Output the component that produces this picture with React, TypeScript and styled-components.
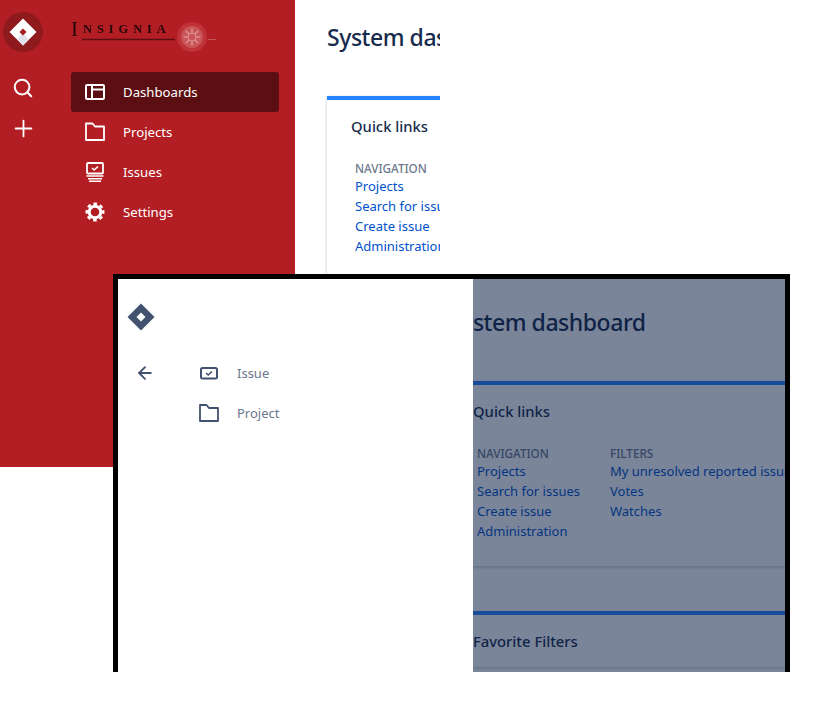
import styled, { createGlobalStyle } from "styled-components";
import { LuSearch, LuPlus, LuArrowLeft } from "react-icons/lu";

const GlobalStyle = createGlobalStyle`
    html, body {
        margin: 0;
        padding: 0;
        background: #fff;
    }
    body {
        font-family: "Noto Sans", "Open Sans", sans-serif;
    }
`;

const Page = styled.div`
    position: relative;
    width: 820px;
    height: 727px;
    overflow: hidden;
    background: #fff;
`;

const Backdrop = styled.div`
    display: flex;
    align-items: flex-start;
`;

const Sidebar = styled.aside`
    display: flex;
    width: 295px;
    height: 467px;
    background: #b31e25;
    color: #fff;
`;

const GlobalRail = styled.div`
    width: 46px;
    display: flex;
    flex-direction: column;
    align-items: center;
    padding-top: 12px;
    box-sizing: border-box;
`;

const RailButton = styled.span`
    display: flex;
    align-items: center;
    justify-content: center;
    height: 40px;
    font-size: 22px;
`;

const RailLogo = styled.svg`
    width: 40px;
    height: 40px;
    margin-bottom: 16px;
`;

const NavColumn = styled.div`
    margin-left: 25px;
    width: 208px;
`;

const Brand = styled.svg`
    display: block;
    width: 150px;
    height: 72px;
    filter: blur(0.4px);
`;

const NavItem = styled.a<{ $active?: boolean }>`
    display: flex;
    align-items: center;
    height: 40px;
    padding-left: 14px;
    gap: 18px;
    border-radius: 3px;
    font-size: 13.2px;
    color: #fff;
    background: ${(p) => (p.$active ? "#5c0f12" : "transparent")};
`;

const NavIcon = styled.svg`
    width: 20px;
    height: 20px;
    flex: none;
`;

const MainClip = styled.main`
    width: 113px;
    height: 467px;
    overflow: hidden;
    padding-left: 32px;
`;

const Content = styled.div<{ $top: number }>`
    width: 400px;
    padding-top: ${(p) => p.$top}px;
    color: #172b4d;
`;

const Title = styled.h1`
    margin: 0 0 41px;
    height: 36px;
    font-size: 23px;
    letter-spacing: -0.45px;
    line-height: 36px;
    font-weight: 500;
    white-space: nowrap;
`;

const Card = styled.section<{ $height: number }>`
    height: ${(p) => p.$height}px;
    box-sizing: border-box;
    border-top: 4px solid #2684ff;
    box-shadow: 0 1px 3px rgba(9, 30, 66, 0.25);
    margin-bottom: 45px;
    padding: 0 24px;
`;

const CardTitle = styled.h2`
    margin: 0;
    padding-top: 15px;
    font-size: 14.8px;
    line-height: 22px;
    font-weight: 500;
`;

const LinkColumns = styled.div`
    display: flex;
    margin-top: 24px;
    padding-left: 4px;
`;

const LinkColumn = styled.div<{ $width: number }>`
    width: ${(p) => p.$width}px;
    flex: none;
`;

const ColumnHead = styled.div`
    font-size: 11.7px;
    line-height: 15px;
    font-weight: 500;
    color: #6b778c;
`;

const QuickLink = styled.a`
    display: block;
    font-size: 13px;
    line-height: 20px;
    color: #0052cc;
    white-space: nowrap;
`;

const Overlay = styled.div`
    position: absolute;
    left: 113px;
    top: 274px;
    width: 677px;
    height: 398px;
    box-sizing: border-box;
    display: flex;
    border: 5px solid #000;
    border-bottom: none;
`;

const Drawer = styled.div`
    width: 355px;
    flex: none;
    background: #fff;
    color: #42526e;
`;

const DrawerLogo = styled.svg`
    display: block;
    width: 28px;
    height: 28px;
    margin: 24px 0 0 9px;
`;

const DrawerBody = styled.div`
    display: flex;
    margin-top: 22px;
`;

const BackButton = styled.span`
    display: flex;
    align-items: center;
    justify-content: center;
    width: 54px;
    height: 40px;
    font-size: 20px;
`;

const DrawerList = styled.div`
    margin-left: 26px;
`;

const DrawerItem = styled.a`
    display: flex;
    align-items: center;
    gap: 17px;
    height: 40px;
    font-size: 13px;
    color: #6b778c;
`;

const DrawerIcon = styled.svg`
    width: 22px;
    height: 22px;
    flex: none;
`;

const Blanket = styled.div`
    position: relative;
    flex: 1;
    overflow: hidden;

    &::after {
        content: "";
        position: absolute;
        inset: 0;
        background: rgba(9, 30, 66, 0.54);
    }
`;

const BlanketInner = styled.div`
    margin-left: -24px;
`;

function Dashboard({ top }: { top: number }) {
    return (
        <Content $top={top}>
            <Title>System dashboard</Title>
            <Card $height={185}>
                <CardTitle>Quick links</CardTitle>
                <LinkColumns>
                    <LinkColumn $width={133}>
                        <ColumnHead>NAVIGATION</ColumnHead>
                        <QuickLink>Projects</QuickLink>
                        <QuickLink>Search for issues</QuickLink>
                        <QuickLink>Create issue</QuickLink>
                        <QuickLink>Administration</QuickLink>
                    </LinkColumn>
                    <LinkColumn $width={220}>
                        <ColumnHead>FILTERS</ColumnHead>
                        <QuickLink>My unresolved reported issues</QuickLink>
                        <QuickLink>Votes</QuickLink>
                        <QuickLink>Watches</QuickLink>
                    </LinkColumn>
                </LinkColumns>
            </Card>
            <Card $height={56}>
                <CardTitle>Favorite Filters</CardTitle>
            </Card>
        </Content>
    );
}

export default function App() {
    return (
        <Page>
            <GlobalStyle />
            <Backdrop>
                <Sidebar>
                    <GlobalRail>
                        <RailLogo viewBox="0 0 40 40">
                            <circle cx="20" cy="20" r="20" fill="#8f1a1e" />
                            <path d="M20 6.500 33.500 20 20 33.500 6.500 20Z" fill="#fff" />
                            <path d="M20 33.500 26 27.500 20 21 14 27Z" fill="#dfe2ea" />
                            <path d="M20 16.500 23.500 20 20 23.500 16.500 20Z" fill="#a51b22" />
                        </RailLogo>
                        <RailButton><LuSearch strokeWidth={2.2} /></RailButton>
                        <RailButton><LuPlus strokeWidth={1.6} style={{ fontSize: 27 }} /></RailButton>
                    </GlobalRail>
                    <NavColumn>
                        <Brand viewBox="0 0 150 72">
                            <text x="0" y="36" fontFamily="Liberation Serif" fontSize="21" fill="#240709">I</text>
                            <text x="12" y="33" fontFamily="Liberation Serif" fontWeight="700" fontSize="12.5" letterSpacing="4.9" fill="#240709">NSIGNIA</text>
                            <path d="M11 39.500H104" stroke="#5e0d11" strokeWidth="1.300" />
                            <circle cx="121" cy="37" r="15" fill="#bf3237" />
                            <circle cx="121" cy="37" r="11" fill="#c95558" />
                            <path d="M115 31l12 12M127 31l-12 12M121 28.500v17M112.500 37h17" stroke="#dc8f90" strokeWidth="1.600" />
                            <circle cx="121" cy="37" r="4" fill="#c95558" stroke="#dc8f90" />
                            <path d="M137 39.500h8" stroke="#c9575a" />
                        </Brand>
                        <NavItem $active>
                            <NavIcon viewBox="0 0 20 20" fill="none" stroke="#fff" strokeWidth="2">
                                <rect x="1" y="3" width="18" height="14" rx="1" />
                                <path d="M7 3v14M7 7.500h12" />
                            </NavIcon>
                            Dashboards
                        </NavItem>
                        <NavItem>
                            <NavIcon viewBox="0 0 20 20" fill="none" stroke="#fff" strokeWidth="1.800" strokeLinejoin="round">
                                <path d="M1 1.500h6.500l2.500 3h9v13.500H1Z" />
                            </NavIcon>
                            Projects
                        </NavItem>
                        <NavItem>
                            <NavIcon viewBox="0 0 20 20" fill="none" stroke="#fff" strokeWidth="1.800">
                                <rect x="2" y="1" width="16" height="10.500" rx="1" />
                                <path d="M7 6l2.200 2L13 4.500" strokeWidth="1.600" />
                                <path d="M1.500 14h17M3 16.800h14M4 19.200h12" strokeWidth="1.400" />
                            </NavIcon>
                            Issues
                        </NavItem>
                        <NavItem>
                            <NavIcon viewBox="0 0 20 20" fill="none" stroke="#fff">
                                <circle cx="10" cy="10" r="5.800" strokeWidth="3" />
                                <circle
                                    cx="10"
                                    cy="10"
                                    r="8.300"
                                    strokeWidth="2.400"
                                    strokeDasharray="3.600 2.920"
                                    transform="rotate(-12.500 10 10)"
                                />
                            </NavIcon>
                            Settings
                        </NavItem>
                    </NavColumn>
                </Sidebar>
                <MainClip>
                    <Dashboard top={19} />
                </MainClip>
            </Backdrop>
            <Overlay>
                <Drawer>
                    <DrawerLogo viewBox="0 0 28 28">
                        <path d="M14 .5 27.500 14 14 27.500 .5 14Z" fill="#42526e" />
                        <path d="M14 9.500 18.500 14 14 18.500 9.500 14Z" fill="#fff" />
                    </DrawerLogo>
                    <DrawerBody>
                        <BackButton><LuArrowLeft strokeWidth={2.2} /></BackButton>
                        <DrawerList>
                            <DrawerItem>
                                <DrawerIcon viewBox="0 0 22 22" fill="none" stroke="#42526e" strokeWidth="2">
                                    <rect x="3" y="6" width="16" height="10.500" rx="1.500" />
                                    <path d="M8 11l2.200 2L14 9.500" strokeWidth="1.600" />
                                </DrawerIcon>
                                Issue
                            </DrawerItem>
                            <DrawerItem>
                                <DrawerIcon viewBox="0 0 22 22" fill="none" stroke="#42526e" strokeWidth="1.800" strokeLinejoin="round">
                                    <path d="M2 3h6.500l2.500 3h9v13H2Z" />
                                </DrawerIcon>
                                Project
                            </DrawerItem>
                        </DrawerList>
                    </DrawerBody>
                </Drawer>
                <Blanket>
                    <BlanketInner>
                        <Dashboard top={25} />
                    </BlanketInner>
                </Blanket>
            </Overlay>
        </Page>
    );
}
